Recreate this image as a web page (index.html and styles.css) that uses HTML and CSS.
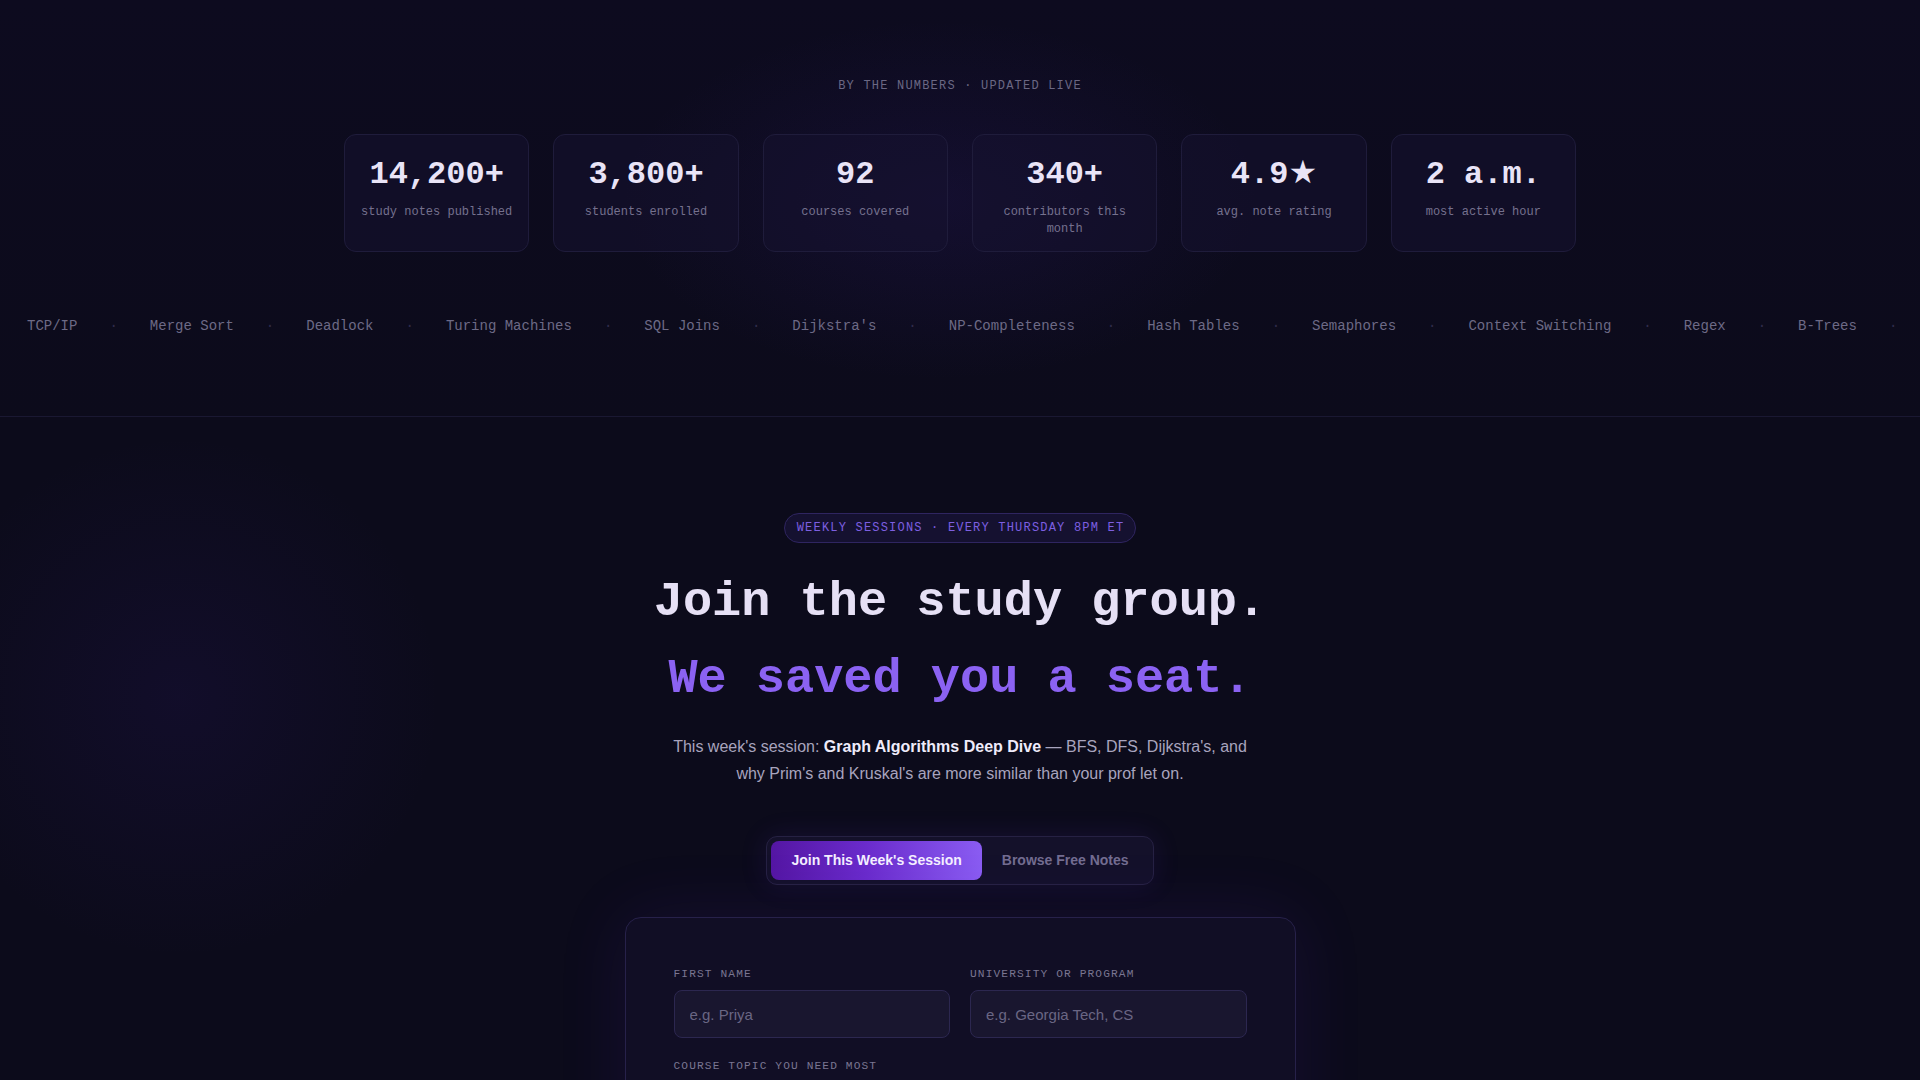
FILE: index.html
```html
<!DOCTYPE html>
<html lang="en">
<head>
<meta charset="utf-8">
<title>Study Group</title>
<link rel="stylesheet" href="styles.css">
</head>
<body>
<section class="stats">
  <div class="glow glow-stats"></div>
  <p class="eyebrow">BY THE NUMBERS · UPDATED LIVE</p>
  <div class="stat-grid">
    <div class="stat-card"><div class="stat-num">14,200+</div><div class="stat-label">study notes published</div></div>
    <div class="stat-card"><div class="stat-num">3,800+</div><div class="stat-label">students enrolled</div></div>
    <div class="stat-card"><div class="stat-num">92</div><div class="stat-label">courses covered</div></div>
    <div class="stat-card"><div class="stat-num">340+</div><div class="stat-label">contributors this month</div></div>
    <div class="stat-card"><div class="stat-num">4.9<span class="star">★</span></div><div class="stat-label">avg. note rating</div></div>
    <div class="stat-card"><div class="stat-num">2 a.m.</div><div class="stat-label">most active hour</div></div>
  </div>
  <div class="ticker">
    <div class="ticker-track">
      <span class="tick">TCP/IP</span><span class="sep">·</span>
      <span class="tick">Merge Sort</span><span class="sep">·</span>
      <span class="tick">Deadlock</span><span class="sep">·</span>
      <span class="tick">Turing Machines</span><span class="sep">·</span>
      <span class="tick">SQL Joins</span><span class="sep">·</span>
      <span class="tick">Dijkstra's</span><span class="sep">·</span>
      <span class="tick">NP-Completeness</span><span class="sep">·</span>
      <span class="tick">Hash Tables</span><span class="sep">·</span>
      <span class="tick">Semaphores</span><span class="sep">·</span>
      <span class="tick">Context Switching</span><span class="sep">·</span>
      <span class="tick">Regex</span><span class="sep">·</span>
      <span class="tick">B-Trees</span><span class="sep">·</span>
    </div>
  </div>
</section>

<section class="join">
  <div class="glow glow-left"></div>
  <div class="hero">
    <span class="badge">WEEKLY SESSIONS · EVERY THURSDAY 8PM ET</span>
    <h1 class="headline"><span class="line">Join the study group.</span><span class="line accent">We saved you a seat.</span></h1>
    <p class="lede">This week's session: <strong>Graph Algorithms Deep Dive</strong> — BFS, DFS, Dijkstra's, and why Prim's and Kruskal's are more similar than your prof let on.</p>
    <div class="toggle">
      <button class="toggle-btn active" type="button">Join This Week's Session</button>
      <button class="toggle-btn" type="button">Browse Free Notes</button>
    </div>
    <form class="form-card">
      <div class="field">
        <label class="field-label" for="fname">FIRST NAME</label>
        <input class="field-input" id="fname" type="text" placeholder="e.g. Priya">
      </div>
      <div class="field">
        <label class="field-label" for="uni">UNIVERSITY OR PROGRAM</label>
        <input class="field-input" id="uni" type="text" placeholder="e.g. Georgia Tech, CS">
      </div>
      <div class="field wide">
        <label class="field-label" for="topic">COURSE TOPIC YOU NEED MOST</label>
        <input class="field-input" id="topic" type="text" placeholder="e.g. Operating Systems">
      </div>
    </form>
  </div>
</section>
</body>
</html>
```

FILE: styles.css
```css
* { box-sizing: border-box; }

html, body {
  margin: 0;
  padding: 0;
  background: #0c0b1b;
  color: #e8e3f6;
  font-family: "Liberation Sans", Arial, sans-serif;
}

body { overflow-x: hidden; }

.glow {
  position: absolute;
  pointer-events: none;
  border-radius: 50%;
}

.stats {
  position: relative;
  padding: 77px 0 80px;
  border-bottom: 1px solid #1a1832;
  background: linear-gradient(180deg, #0d0b1f 0%, #0c0b1b 100%);
}

.glow-stats {
  left: 620px;
  top: 20px;
  width: 640px;
  height: 360px;
  background: radial-gradient(closest-side, rgba(70, 40, 170, 0.13), rgba(70, 40, 170, 0));
}

.eyebrow {
  position: relative;
  margin: 0;
  text-align: center;
  font-family: "Liberation Mono", monospace;
  font-size: 12px;
  line-height: 18px;
  letter-spacing: 0.1em;
  color: #6b6884;
}

.stat-grid {
  position: relative;
  width: 1232px;
  margin: 39px auto 0;
  display: grid;
  grid-template-columns: repeat(6, 1fr);
  gap: 24px;
}

.stat-card {
  background: rgba(22, 18, 48, 0.55);
  border: 1px solid #1f1c3b;
  border-radius: 12px;
  padding: 22px 14px 13px;
  text-align: center;
  font-family: "Liberation Mono", monospace;
}

.stat-num {
  font-size: 32px;
  line-height: 36px;
  height: 36px;
  font-weight: 700;
  color: #e9e4f7;
}

.star {
  font-family: "DejaVu Sans", sans-serif;
  font-weight: 400;
  line-height: 0;
}

.stat-label {
  margin-top: 11px;
  font-size: 12px;
  line-height: 16.8px;
  color: #75718e;
}

.ticker {
  position: relative;
  margin-top: 64px;
  overflow: hidden;
}

.ticker-track {
  display: flex;
  white-space: nowrap;
  padding-left: 27px;
  font-family: "Liberation Mono", monospace;
  font-size: 14px;
  line-height: 20px;
}

.tick { color: #6d6a86; }

.sep {
  margin: 0 32px;
  color: #302c4b;
}

.join {
  position: relative;
  padding: 96px 0 80px;
  overflow: hidden;
}

.glow-left {
  left: -80px;
  top: 20px;
  width: 520px;
  height: 520px;
  background: radial-gradient(closest-side, rgba(60, 30, 150, 0.12), rgba(60, 30, 150, 0));
}

.hero {
  position: relative;
  display: flex;
  flex-direction: column;
  align-items: center;
}

.badge {
  display: block;
  padding: 5px 11px 5px 12px;
  border: 1px solid #2f2560;
  border-radius: 999px;
  background: #151130;
  font-family: "Liberation Mono", monospace;
  font-size: 12px;
  line-height: 18px;
  letter-spacing: 0.1em;
  color: #7d5fe0;
}

.headline {
  margin: 21px 0 0;
  font-family: "Liberation Mono", monospace;
  font-size: 48.6px;
  line-height: 77px;
  font-weight: 700;
  text-align: center;
  color: #e6e0f5;
}

.headline .line { display: block; }

.headline .accent { color: #8b62f2; }

.lede {
  margin: 15px 0 0;
  max-width: 585px;
  text-align: center;
  font-size: 16px;
  line-height: 27px;
  color: #a8a4be;
}

.lede strong {
  color: #efebfa;
  font-weight: 700;
}

.toggle {
  margin-top: 49px;
  display: flex;
  padding: 4px;
  border: 1px solid #262143;
  border-radius: 11px;
  background: #14112a;
  box-shadow: 0 0 28px rgba(110, 60, 230, 0.12);
}

.toggle-btn {
  border: 0;
  background: transparent;
  padding: 11px 20px;
  border-radius: 8px;
  font-family: "Liberation Sans", Arial, sans-serif;
  font-size: 14px;
  line-height: 17.5px;
  font-weight: 700;
  color: #736d90;
  cursor: pointer;
}

.toggle-btn.active {
  background: linear-gradient(90deg, #5416a3 0%, #6a2bcc 45%, #8a5cf2 100%);
  color: #f4efff;
}

.form-card {
  margin-top: 32px;
  width: 671px;
  padding: 49px 48px 48px;
  display: grid;
  grid-template-columns: 1fr 1fr;
  column-gap: 20px;
  row-gap: 21px;
  background: #110e25;
  border: 1px solid #27214a;
  border-radius: 16px;
  box-shadow: 0 0 70px rgba(100, 50, 210, 0.12);
}

.field { display: flex; flex-direction: column; }

.field.wide { grid-column: 1 / -1; }

.field-label {
  display: block;
  margin-bottom: 9px;
  font-family: "Liberation Mono", monospace;
  font-size: 11.2px;
  line-height: 14px;
  letter-spacing: 0.1em;
  color: #7a7692;
}

.field-input {
  height: 48px;
  width: 100%;
  padding: 0 15px;
  background: #19162f;
  border: 1px solid #2c2750;
  border-radius: 8px;
  font-family: "Liberation Sans", Arial, sans-serif;
  font-size: 15px;
  color: #e8e3f6;
  outline: none;
}

.field-input::placeholder { color: #6a6684; }
```
